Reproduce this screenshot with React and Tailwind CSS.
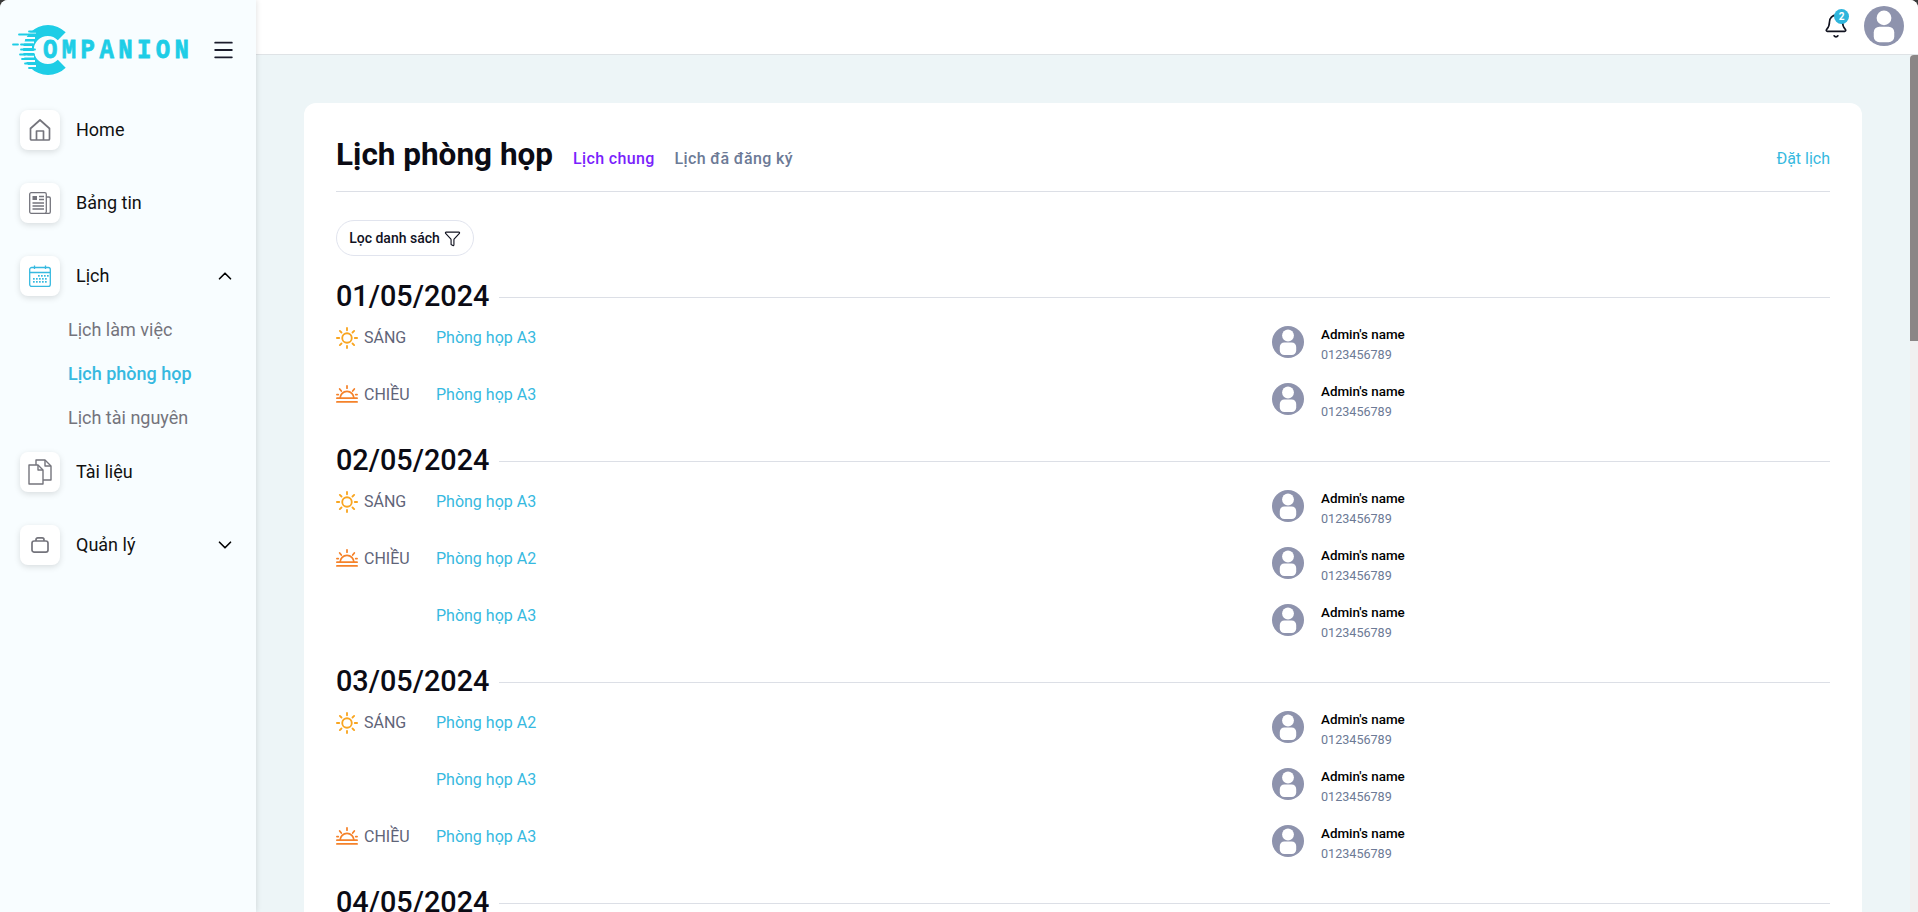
import React from 'react';
import { ChevronUp, ChevronDown, Bell, Funnel, Menu } from 'lucide-react';

const days = [
  {
    date: '01/05/2024',
    rows: [
      { shift: 'SÁNG', room: 'Phòng họp A3' },
      { shift: 'CHIỀU', room: 'Phòng họp A3' },
    ],
  },
  {
    date: '02/05/2024',
    rows: [
      { shift: 'SÁNG', room: 'Phòng họp A3' },
      { shift: 'CHIỀU', room: 'Phòng họp A2' },
      { room: 'Phòng họp A3' },
    ],
  },
  {
    date: '03/05/2024',
    rows: [
      { shift: 'SÁNG', room: 'Phòng họp A2' },
      { room: 'Phòng họp A3' },
      { shift: 'CHIỀU', room: 'Phòng họp A3' },
    ],
  },
  { date: '04/05/2024', rows: [] },
];

const Avatar = ({ className }) => (
  <svg viewBox="0 0 32 32" className={className}>
    <circle cx="16" cy="16" r="16" fill="#8e93ad" />
    <circle cx="16" cy="9.500" r="5.900" fill="#fff" />
    <rect x="7.800" y="16.500" width="16.400" height="12.500" rx="4.500" fill="#fff" />
  </svg>
);

const HomeIcon = () => (
  <svg viewBox="0 0 22 24" className="w-[22px] h-6" fill="none" stroke="#74747c" strokeWidth="1.700" strokeLinejoin="round">
    <path d="M1.500 10.500 11 2l9.500 8.500V21a1 1 0 0 1-1 1h-17a1 1 0 0 1-1-1z" />
    <path d="M7.500 22v-9h7v9" />
  </svg>
);

const NewsIcon = () => (
  <svg viewBox="0 0 22 22" className="w-[22px] h-[22px]" fill="none" stroke="#74747c" strokeWidth="1.300">
    <rect x="0.700" y="0.700" width="16.600" height="20.600" rx="1.500" />
    <path d="M17.500 5h2.500a1.300 1.300 0 0 1 1.300 1.300V20a1.300 1.300 0 0 1-1.300 1.300h-4" />
    <rect x="3.500" y="4" width="4.500" height="4" fill="#74747c" stroke="none" />
    <path d="M10 4.500h5M10 7.500h5M3.500 11h11.500M3.500 14h11.500M3.500 17h11.500" />
  </svg>
);

const CalendarIcon = () => (
  <svg viewBox="0 0 22 22" className="w-[22px] h-[22px]" fill="none" stroke="#36b9e0" strokeWidth="1.300">
    <rect x="0.700" y="2.500" width="20.600" height="19" rx="2" />
    <path d="M0.700 7.500h20.600M5.500 0.500v3.500M16.500 0.500v3.500" />
    <g fill="#36b9e0" stroke="none">
      {[[9, 10], [12, 10], [15, 10], [18, 10], [4, 13], [7, 13], [10, 13], [13, 13], [16, 13], [4, 16], [7, 16], [10, 16], [13, 16], [16, 16]].map(([x, y]) => (
        <rect key={`${x}-${y}`} x={x} y={y} width="1.700" height="1.700" />
      ))}
    </g>
  </svg>
);

const FilesIcon = () => (
  <svg viewBox="0 0 24 26" className="w-6 h-[26px]" fill="none" stroke="#74747c" strokeWidth="1.400" strokeLinejoin="round">
    <path d="M1 6h9l5 5v14H1z" />
    <path d="M10 6v5h5" />
    <path d="M8 6V1h9l6 6v14h-8" />
    <path d="M17 1v6h6" />
  </svg>
);

const CaseIcon = () => (
  <svg viewBox="0 0 20 18" className="w-[18px] h-4" fill="none" stroke="#74747c" strokeWidth="1.900">
    <rect x="1" y="4.500" width="18" height="12.500" rx="2.500" />
    <path d="M5.500 4.500V3a2 2 0 0 1 2-2h5a2 2 0 0 1 2 2v1.500" />
  </svg>
);

const SunIcon = () => (
  <svg viewBox="0 0 24 24" className="w-[22px] h-[22px] shrink-0" fill="none" stroke="#f9a520" strokeWidth="2" strokeLinecap="round">
    <circle cx="12" cy="12" r="5.200" />
    <path d="M12 1v2.500M12 20.500V23M1 12h2.500M20.500 12H23M4.200 4.200l1.800 1.800M18 18l1.800 1.800M4.200 19.800 6 18M18 6l1.800-1.800" />
  </svg>
);

const SunsetIcon = () => (
  <svg viewBox="0 0 24 24" className="w-[22px] h-[22px] shrink-0" fill="none" stroke="#f5822a" strokeWidth="1.900" strokeLinecap="round">
    <path d="M4.500 15.500a7.500 7.500 0 0 1 15 0" />
    <path d="M1 15.500h22M1 19.500h22M12 2v2.500M4 5.500l1.800 2.200M20 5.500l-1.800 2.200M1 11.500h1.500M21.500 11.500H23" />
  </svg>
);

// speed lines on the left of the logo's C, in page pixels minus the svg's offset
const logoCuts = [
  'M14 13.500h12', 'M8 18h17', 'M8 22.500h16', 'M2 27h20', 'M8 32h16', 'M6 36.500h18', 'M8 41h17', 'M12 46h14',
];
const logoDashes = [
  'M19 11.500h8', 'M9 14.500h8M18 14.500h9', 'M16 20h9', 'M3 24.500h5M11 24.500h12', 'M11 29.500h6M20 29.500h5',
  'M10 34.500h5M18 34.500h6', 'M12 39h3M17 39h8', 'M15 43.500h10', 'M19 48h8',
];

const Logo = () => (
  <div className="relative w-[201px] h-[48px] shrink-0">
    <svg viewBox="0 0 60 60" className="absolute left-0 top-[-6px] w-[60px] h-[60px]">
      <path d="M55.700 12.300A25 25 0 1 0 55.700 47.700L47.800 39.800A14 14 0 1 1 47.800 20.200z" fill="#1ecde6" />
      <g stroke="#f8fdff" strokeWidth="2" fill="none">
        {logoCuts.map((d) => (
          <path key={d} d={d} />
        ))}
      </g>
      <g stroke="#1ecde6" strokeWidth="1.800" strokeLinecap="round" fill="none">
        {logoDashes.map((d) => (
          <path key={d} d={d} />
        ))}
      </g>
    </svg>
    <span className="absolute left-[33px] top-[7px] origin-center scale-y-[1.150] font-['Liberation_Mono'] font-bold text-[24px] leading-[36px] tracking-[4.400px] [-webkit-text-stroke:0.700px_#1ecde6] text-[#1ecde6]">
      OMPANION
    </span>
  </div>
);

const NavItem = ({ icon, label, chevron }) => (
  <div className="flex items-center h-10">
    <div className="w-10 h-10 rounded-lg bg-white shadow-[0_2px_6px_rgba(0,0,0,0.13)] flex items-center justify-center">
      {icon}
    </div>
    <span className="ml-4 -mt-[1px] text-[18px] text-[#111] flex-1">{label}</span>
    {chevron}
  </div>
);

const Row = ({ shift, room }) => (
  <div className="h-[57px] flex items-start pt-[9px]">
    <div className="mt-[2px] w-[100px] h-5 flex items-center gap-[6px] text-[16px] text-[#5f6478]">
      {shift === 'SÁNG' && <SunIcon />}
      {shift === 'CHIỀU' && <SunsetIcon />}
      <span>{shift}</span>
    </div>
    <div className="mt-[2px] w-[836px] text-[16px] leading-5 text-[#36b9e0]">{room}</div>
    <Avatar className="w-8 h-8" />
    <div className="ml-[17px] -mt-[1px]">
      <div className="text-[13.400px] leading-5 font-medium text-black">Admin's name</div>
      <div className="text-[12.600px] leading-5 text-[#6c7a96]">0123456789</div>
    </div>
  </div>
);

const Section = ({ date, rows }) => (
  <div className="mb-[10px]">
    <div className="flex items-center h-10 gap-[10px]">
      <span className="text-[28.800px] font-medium text-[#0b0b14]">{date}</span>
      <div className="flex-1 h-px bg-[#dcdfe6]" />
    </div>
    {rows.map((row, i) => (
      <Row key={i} {...row} />
    ))}
  </div>
);

export default function App() {
  return (
    <div className="h-[912px] overflow-hidden bg-[#3a3a3a] font-['Roboto',sans-serif]">
      <div className="h-full flex rounded-t-lg overflow-hidden bg-white">
        {/* Sidebar */}
        <aside className="w-[256px] shrink-0 bg-[#f8fdff] shadow-[1px_0_5px_rgba(0,0,0,0.1)] z-10 px-5 pt-[26px]">
          <div className="flex items-center -ml-[10px] h-[48px]">
            <Logo />
            <Menu className="w-[26px] h-[26px] text-[#1a1c2c]" strokeWidth={1.700} />
          </div>
          <div className="mt-[36px] flex flex-col gap-[33px]">
            <NavItem icon={<HomeIcon />} label="Home" />
            <NavItem icon={<NewsIcon />} label="Bảng tin" />
            <div className="-mb-[11px]">
              <NavItem
                icon={<CalendarIcon />}
                label="Lịch"
                chevron={<ChevronUp className="w-[22px] h-[22px] text-black" strokeWidth={1.800} />}
              />
              <div className="mt-[22px] pl-12 flex flex-col gap-5 text-[18px] leading-6 text-[#74747c]">
                <span>Lịch làm việc</span>
                <span className="text-[#36b9e0] font-medium">Lịch phòng họp</span>
                <span>Lịch tài nguyên</span>
              </div>
            </div>
            <NavItem icon={<FilesIcon />} label="Tài liệu" />
            <NavItem
              icon={<CaseIcon />}
              label="Quản lý"
              chevron={<ChevronDown className="w-[22px] h-[22px] text-black" strokeWidth={1.800} />}
            />
          </div>
        </aside>

        {/* Main column */}
        <div className="flex-1 flex flex-col min-w-0">
          <header className="h-[55px] shrink-0 bg-white border-b border-[#dfe3e6] flex items-center justify-end gap-[15px] pr-[14px] pb-[3px]">
            <div className="relative">
              <Bell className="w-[26px] h-[26px] text-[#10121f]" strokeWidth={1.500} />
              <span className="absolute -top-[4px] left-[11px] w-[15px] h-[15px] rounded-full bg-[#2fb5dc] text-white text-[10px] font-bold flex items-center justify-center">
                2
              </span>
            </div>
            <Avatar className="w-10 h-10" />
          </header>

          <div className="flex-1 flex min-h-0">
            <main className="flex-1 min-w-0 bg-[#edf5f7] pl-[48px] pr-[48px] pt-[48px] overflow-hidden">
              <div className="bg-white rounded-xl px-8 pt-[20px]">
                <div className="h-[69px] border-b border-[#dcdfe6] flex items-center">
                  <h1 className="pb-[4px] text-[31.500px] font-bold text-[#0b0b14]">Lịch phòng họp</h1>
                  <span className="pt-[4px] ml-5 text-[16px] font-medium tracking-[0.350px] text-[#7a1ffc]">Lịch chung</span>
                  <span className="pt-[4px] ml-5 text-[16px] font-medium tracking-[0.350px] text-[#6c7a96]">Lịch đã đăng ký</span>
                  <span className="pt-[4px] ml-auto text-[16px] text-[#36b9e0]">Đặt lịch</span>
                </div>
                <div className="mt-[28px] mb-[21px] w-[138px] h-[36px] rounded-full border border-[#e1e4ee] flex items-center justify-center gap-[4px] text-[14px] font-medium text-[#10121f]">
                  Lọc danh sách
                  <Funnel className="w-[17px] h-[17px]" strokeWidth={1.600} />
                </div>
                {days.map((day) => (
                  <Section key={day.date} {...day} />
                ))}
              </div>
            </main>
            {/* Scrollbar */}
            <div className="w-[8px] shrink-0 bg-[#f0f0f0]">
              <div className="h-[286px] bg-[#8a8686] rounded-tl-[4px]" />
            </div>
          </div>
        </div>
      </div>
    </div>
  );
}
